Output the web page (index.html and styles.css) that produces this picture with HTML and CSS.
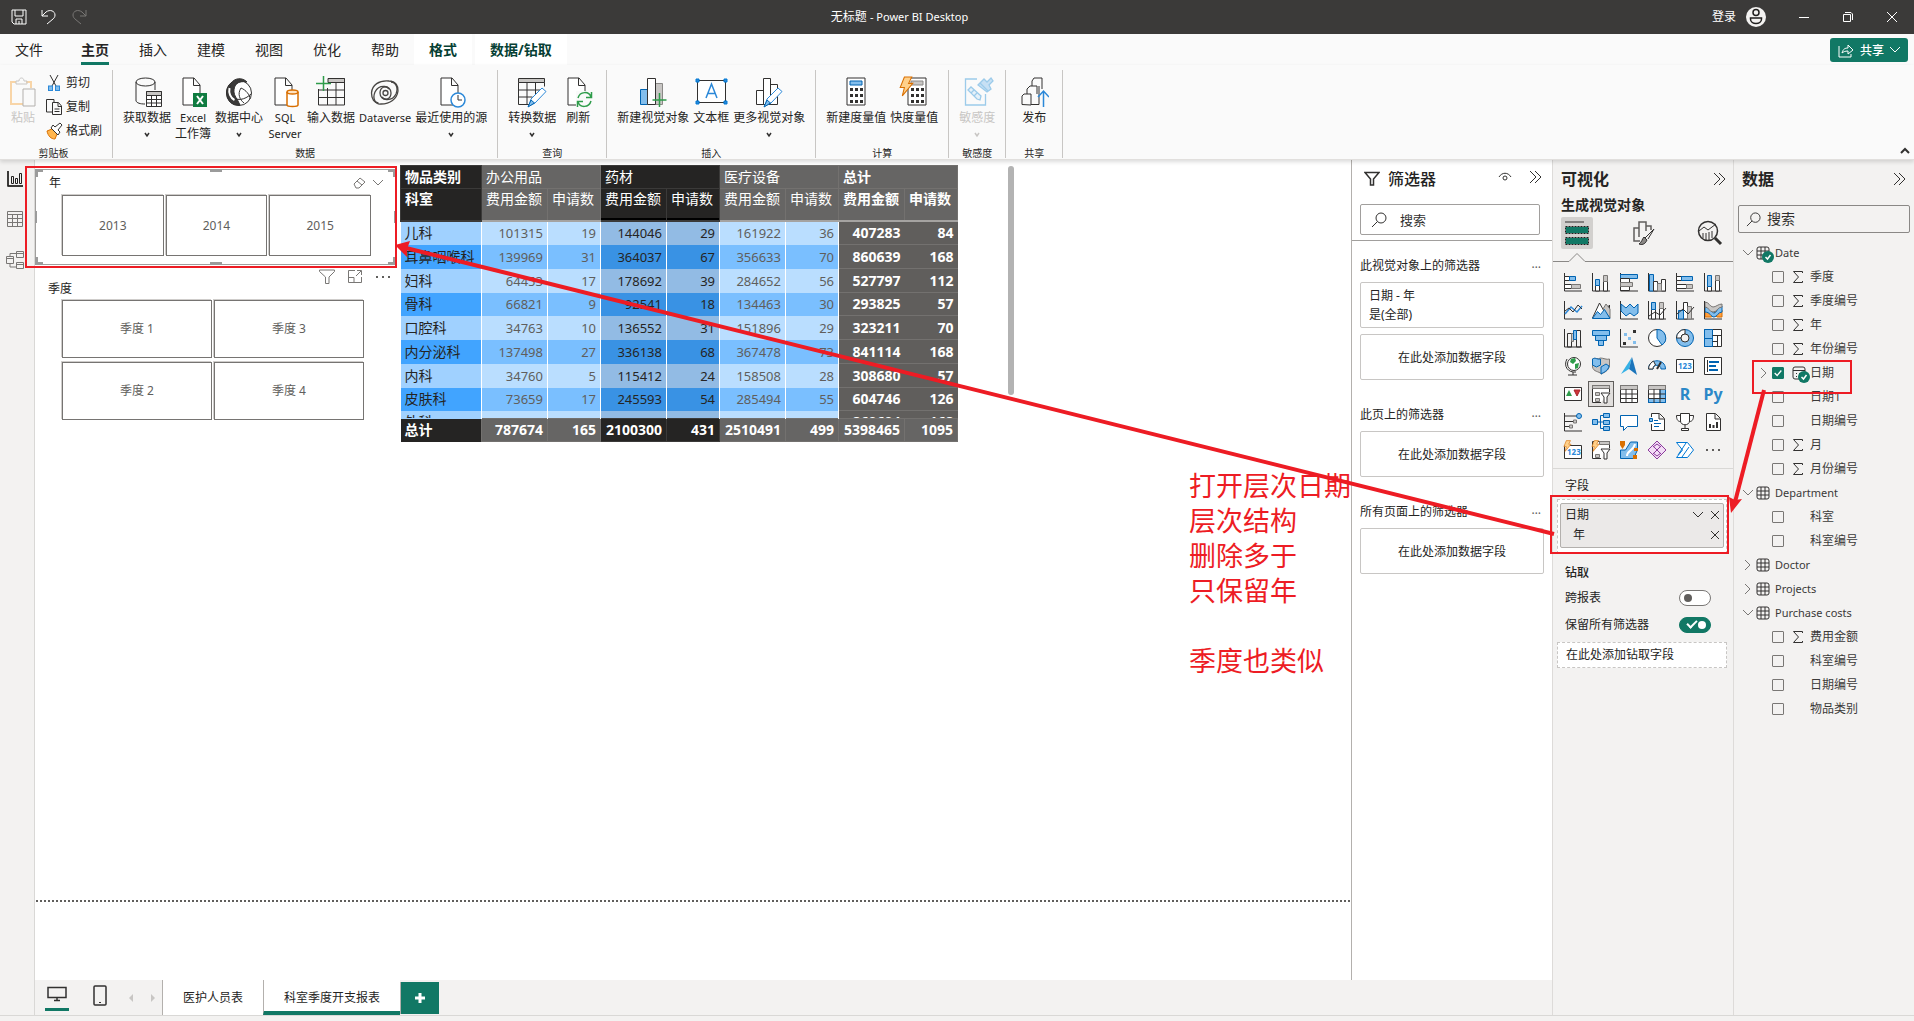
FILE: index.html
```html
<!DOCTYPE html>
<html lang="zh-CN">
<head>
<meta charset="utf-8">
<title>无标题 - Power BI Desktop</title>
<link rel="stylesheet" href="styles.css">
</head>
<body>
<svg class="defs" aria-hidden="true">
  <symbol id="dbl" viewBox="0 0 14 14"><path d="M2 1l6 6-6 6M7 1l6 6-6 6"/></symbol>
  <symbol id="down" viewBox="0 0 12 12"><path d="M1 3l5 5 5-5"/></symbol>
  <symbol id="right" viewBox="0 0 12 12"><path d="M3 1l5 5-5 5"/></symbol>
  <symbol id="cross" viewBox="0 0 10 10"><path d="M1 1l8 8M9 1l-8 8"/></symbol>
  <symbol id="caret" viewBox="0 0 6 6"><path d="M1 1l2 3 2-3" stroke-width="1.5"/></symbol>
  <symbol id="search" viewBox="0 0 16 16"><circle cx="10" cy="6" r="5"/><path d="M6.400 9.600L1 15"/></symbol>
  <symbol id="more" viewBox="0 0 16 4"><path d="M1 1h2v2H1zM7 1h2v2H7zM13 1h2v2h-2z" fill="#605e5c" stroke="none"/></symbol>
  <symbol id="sum" viewBox="0 0 12 14"><path d="M10.500 3V1.500h-9L6.500 7l-5 5.500h9V11"/></symbol>
  <symbol id="tbl" viewBox="0 0 14 14"><rect x="1" y="1" width="12" height="12" rx="2"/><path d="M1 5h12M1 9h12M5 1v12M9 1v12"/></symbol>
  <symbol id="doc" viewBox="0 0 30 32"><path d="M5 2h11l6 7v20H5zM15.500 2v7.500H22" fill="#fff"/></symbol>
  <symbol id="pen" viewBox="0 0 20 22"><path d="M2 20l2-7L15 2l4 3.500L8 17z" fill="#fff" stroke="#2b88d8"/><path d="M1 21l3-7 3.500 3z" fill="#83beec" stroke="#0063b1"/></symbol>
  <symbol id="calc" viewBox="0 0 30 32"><path d="M6 2h18v27H6z" fill="#fff"/><path d="M9 12h3v3H9zm5 0h3v3h-3zm5 0h3v3h-3zM9 18h3v3H9zm5 0h3v3h-3zm5 0h3v3h-3zM9 24h3v3H9zm5 0h3v3h-3zm5 0h3v3h-3z" fill="#323130" stroke="none"/></symbol>
  <symbol id="bolt" viewBox="0 0 14 20"><path d="M5 1h7L9 7h4L3 19l2-8H1z" fill="#ffd08a" stroke="#d96f00"/></symbol>
</svg>

<header class="titlebar">
  <div class="quick">
    <button aria-label="保存"><svg width="16" height="16" viewBox="0 0 16 16"><path d="M1 1h14v14H3l-2-2zM4 1v6h8V1M5 15v-5h6v5M8 12v3"/></svg></button>
    <button aria-label="撤消"><svg width="16" height="16" viewBox="0 0 16 16"><path d="M1 1v6h6M1 7l4-4c4-3 9-1 9 3 0 2-1 3-2 4l-6 5"/></svg></button>
    <button aria-label="恢复" class="dim"><svg width="16" height="16" viewBox="0 0 16 16"><path d="M15 1v6H9M15 7l-4-4C7 0 2 2 2 6c0 2 1 3 2 4l6 5"/></svg></button>
  </div>
  <div class="title">无标题 <span>- Power BI Desktop</span></div>
  <div class="window">
    <button class="login">登录 <svg width="20" height="20" viewBox="0 0 20 20"><circle cx="10" cy="10" r="10" fill="#f3f2f1" stroke="none"/><g stroke="#201f1e" stroke-width="1.500"><circle cx="10" cy="5.500" r="3"/><path d="M4.500 11h11v1c0 6-11 6-11 0z"/></g></svg></button>
    <button aria-label="最小化"><svg width="12" height="12" viewBox="0 0 12 12"><path d="M1 6.500h10"/></svg></button>
    <button aria-label="还原"><svg width="12" height="12" viewBox="0 0 12 12"><path d="M1.500 3.500h7v7h-7zM3 1.500h6l1.500 1.500v6"/></svg></button>
    <button aria-label="关闭"><svg width="12" height="12" viewBox="0 0 12 12"><path d="M1 1l10 10M11 1L1 11"/></svg></button>
  </div>
</header>

<nav class="tabs">
  <a href="#" class="file">文件</a><a href="#" class="on">主页</a><a href="#">插入</a><a href="#">建模</a><a href="#">视图</a><a href="#">优化</a><a href="#">帮助</a><a href="#" class="ctx">格式</a><a href="#" class="ctx second">数据/钻取</a>
  <button class="share"><svg width="18" height="16" viewBox="0 0 18 16"><path d="M2 4v11h12v-3M5 11c1-4 3-5 6-5V3M11 3l5 5-5 4V9c-3 0-5 1-6 2"/></svg>共享<svg width="12" height="12"><use href="#down"/></svg></button>
</nav>

<section class="ribbon">
  <div class="group">
    <div class="row">
      <button class="cmd off"><svg width="30" height="32" viewBox="0 0 30 32"><path d="M8 6H3v22h12M18 6h5v6" stroke="#f8d5a8" stroke-width="2"/><path d="M8 8V5h3c0-4 5-4 5 0h3v3z" stroke="#c8c6c4"/><path d="M15 13h12v17H15z" fill="#fafafa" stroke="#b3b0ad"/></svg>粘贴</button>
      <div class="stack">
        <button><svg width="18" height="18" viewBox="0 0 18 18"><path d="M5 1l6 11M13 1L7 12"/><rect x="3.500" y="12" width="4" height="4.500" fill="#83beec" stroke="#2b88d8"/><rect x="10.500" y="12" width="4" height="4.500" fill="#83beec" stroke="#2b88d8"/></svg>剪切</button>
        <button><svg width="18" height="18" viewBox="0 0 18 18"><path d="M7 14H1.500V1.500H9V4M7.500 4.500h6l3 3.500v8.500h-9zM13 5v3.500h3M9.500 11h5M9.500 13.500h5"/></svg>复制</button>
        <button><svg width="18" height="18" viewBox="0 0 18 18"><path d="M2 9l5-2 5 5-2 5c-4 0-7-3-8-8z" fill="#ffb54d" stroke="#d96f00"/><path d="M6 6l7 7 2-3-2-2 4-5-2-2-5 4-2-2z" fill="#fff"/></svg>格式刷</button>
      </div>
    </div>
    <div class="name">剪贴板</div>
  </div>
  <div class="group">
    <div class="row">
      <button class="cmd"><svg width="30" height="32" viewBox="0 0 30 32"><path d="M13 28c-5 0-8-1-9-3V6M23 6v8"/><ellipse cx="13.500" cy="6" rx="9.500" ry="4"/><path d="M14.500 15.500h15v15h-15z" fill="#fff"/><path d="M14.500 15.500h15v4h-15z" fill="#c8c6c4"/><path d="M19.500 19.500v11M24.500 19.500v11M14.500 23.500h15M14.500 27h15"/></svg>获取数据<svg class="ct" width="6" height="6"><use href="#caret"/></svg></button>
      <button class="cmd"><svg width="30" height="32" viewBox="0 0 30 32"><use href="#doc"/><path d="M15 17h14v14H15z" fill="#107c41" stroke="none"/><path d="M19 20l6 8M25 20l-6 8" stroke="#fff" stroke-width="2"/></svg><i>Excel</i>工作簿</button>
      <button class="cmd"><svg width="30" height="32" viewBox="0 0 30 32"><circle cx="15" cy="17" r="12.500" fill="#fff"/><path d="M7 7c4-5 11-6 16-1-5-1-10 0-12 4-2 5-1 9 2 13l3 6C8 30 3 25 2.500 17 2.500 13 4 9 7 7z" fill="#3b3a39"/><path d="M17 12c-4 6-1 12 3 15M17 12c5 2 9 7 9 11M6 19c6 7 15 5 21-1M7 9c-3 5-2 11 2 15" /><path d="M5.500 12c-1 5 1 10 5 12" stroke="#fff" stroke-width="2"/></svg>数据中心<svg class="ct" width="6" height="6"><use href="#caret"/></svg></button>
      <button class="cmd"><svg width="30" height="32" viewBox="0 0 30 32"><use href="#doc"/><path d="M17 16v13c0 2 11 2 11 0V16" fill="#fff" stroke="#d96f00" stroke-width="1.500"/><ellipse cx="22.500" cy="16" rx="5.500" ry="2" fill="#ffe2c0" stroke="#d96f00" stroke-width="1.500"/></svg><i>SQL</i><i>Server</i></button>
      <button class="cmd"><svg width="30" height="32" viewBox="0 0 30 32"><path d="M12 2.500h16.500v4H12z" fill="#c8c6c4"/><path d="M2.500 13v16h26V2.500M2.500 14h26M2.500 21.500h26M11.500 12v17M20 6v23M12 6.500h16"/><path d="M7.500 0v15M0 7.500h15" stroke="#2e9c4a" stroke-width="1.500"/></svg>输入数据</button>
      <button class="cmd"><svg width="30" height="32" viewBox="0 0 30 32"><g stroke="#484644" stroke-width="1.300"><path d="M19 13c-3-4-9-2-9 4 0 8 12 9 16 1 3-7-1-13-7-13C9 4 2 9 1.500 17c0 6 3 10 7 10"/><path d="M12 21c3 4 9 2 9-4 0-8-12-9-16-1-3 7 1 13 6 12 9 0 16-5 17-13 0-6-3-9-7-9"/><circle cx="15.500" cy="17" r="2.500"/></g></svg><i>Dataverse</i></button>
      <button class="cmd"><svg width="30" height="32" viewBox="0 0 30 32"><use href="#doc"/><circle cx="22" cy="24" r="7" fill="#fff" stroke="#2b88d8" stroke-width="1.500"/><path d="M22 19v5h4"/></svg>最近使用的源<svg class="ct" width="6" height="6"><use href="#caret"/></svg></button>
    </div>
    <div class="name">数据</div>
  </div>
  <div class="group">
    <div class="row">
      <button class="cmd"><svg width="30" height="32" viewBox="0 0 30 32"><path d="M1.500 2.500h26v4h-26z" fill="#c8c6c4"/><path d="M1.500 6.500v22h12M27.500 6.500v4M1.500 14h22M1.500 21h14M10 6.500v22M18.500 6.500v12"/><use href="#pen" x="10" y="10" width="20" height="22"/></svg>转换数据<svg class="ct" width="6" height="6"><use href="#caret"/></svg></button>
      <button class="cmd"><svg width="30" height="32" viewBox="0 0 30 32"><use href="#doc"/><path d="M13 15h16v17H13z" fill="#fafafa" stroke="none"/><path d="M15 22c2-7 11-7 13-1M28.500 16v5.500H23M28 25c-2 7-11 7-13 1M14.500 31v-5.500H20" stroke="#2e9c4a" stroke-width="1.500"/></svg>刷新</button>
    </div>
    <div class="name">查询</div>
  </div>
  <div class="group">
    <div class="row">
      <button class="cmd"><svg width="30" height="32" viewBox="0 0 30 32"><path d="M2.500 13.500h7v15h-7z" fill="#83beec" stroke="#0063b1"/><path d="M17.500 7.500h7v21h-7z" fill="#c8c6c4" stroke="#8a8886"/><path d="M9.500 2.500h8v26h-8z" fill="#fff"/><path d="M21.500 17v14M14.500 24h14" stroke="#2e9c4a" stroke-width="1.500"/></svg>新建视觉对象</button>
      <button class="cmd"><svg width="34" height="32" viewBox="0 0 34 32"><path d="M3.500 4.500h28v22h-28z" fill="#fff"/><path d="M2 3h3v3H2zm28 0h3v3h-3zM2 25h3v3H2zm28 0h3v3h-3z" fill="#2b88d8" stroke="#0078d4"/><path d="M12 22l5.500-14L23 22M14 17.500h7" stroke="#2b88d8" stroke-width="1.500"/></svg>文本框</button>
      <button class="cmd"><svg width="30" height="32" viewBox="0 0 30 32"><path d="M2.500 14.500h7v14h-7zM9.500 2.500h7v26h-7zM16.500 8.500h7v20h-7z" fill="#fff"/><use href="#pen" x="9" y="10" width="20" height="22"/></svg>更多视觉对象<svg class="ct" width="6" height="6"><use href="#caret"/></svg></button>
    </div>
    <div class="name">插入</div>
  </div>
  <div class="group">
    <div class="row">
      <button class="cmd"><svg width="30" height="32" viewBox="0 0 30 32"><use href="#calc"/><path d="M9 5h12v4H9z" fill="#83beec" stroke="#0063b1"/></svg>新建度量值</button>
      <button class="cmd"><svg width="30" height="32" viewBox="0 0 30 32"><use href="#calc" x="3"/><path d="M12 5h12v4H12z" fill="#c8c6c4" stroke="#8a8886"/><use href="#bolt" x="0" y="0" width="15" height="21"/></svg>快度量值</button>
    </div>
    <div class="name">计算</div>
  </div>
  <div class="group">
    <div class="row">
      <button class="cmd off"><svg width="34" height="32" viewBox="0 0 34 32"><g stroke="#9ccbea" stroke-width="1.300"><path d="M17 3H5.500v26h20V18"/><path d="M8 14l3-3 10 9-1 4-3-1z" fill="#e5f1fa"/><path d="M11 17l3-3M14 20l3-3"/><path d="M18 9l6-6 3 3 4-4 2 3-4 4 2 4-4 3z" fill="#c7e0f4"/><path d="M20 7l8 8"/></g></svg>敏感度<svg class="ct" width="6" height="6"><use href="#caret"/></svg></button>
    </div>
    <div class="name">敏感度</div>
  </div>
  <div class="group">
    <div class="row">
      <button class="cmd"><svg width="30" height="32" viewBox="0 0 30 32"><path d="M3 28.500V20l2-2h7v11zM8 18v-5l3-3h7v8M13 10V5l2-3h8v11M12 28.500h8V10"/><path d="M24.500 31V16M19 21l5.500-6 5.500 6" stroke="#2b88d8" stroke-width="1.500"/></svg>发布</button>
    </div>
    <div class="name">共享</div>
  </div>
  <button class="collapse" aria-label="折叠功能区"><svg width="10" height="8" viewBox="0 0 10 8"><path d="M1 6l4-4 4 4" stroke-width="2"/></svg></button>
</section>

<main>
  <nav class="rail">
    <button aria-label="报表视图" class="now"><svg width="18" height="18" viewBox="0 0 18 18"><path d="M2 1v15h15M5.500 13.500v-7h2v7zM9.500 13.500v-5h2v5zM13.500 13.500v-10h2v10z"/><path d="M2 1v15h15" stroke-width="1.500"/></svg></button>
    <button aria-label="数据视图"><svg width="18" height="18" viewBox="0 0 18 18"><path d="M1.500 1.500h15v15h-15zM1.500 4.500h15M1.500 8.500h15M1.500 12.500h15M6.500 4.500v12M11.500 4.500v12"/></svg></button>
    <button aria-label="模型视图"><svg width="20" height="20" viewBox="0 0 20 20"><path d="M1.500 6.500h7v7h-7zM1.500 8.500h7M11.500 1.500h7v6h-7zM11.500 3.500h7M11.500 12.500h7v6h-7zM11.500 14.500h7M5 6V3.500h6M5 14v3h6"/></svg></button>
  </nav>

  <div class="work">
    <div class="upper">
      <section class="canvas">
        <div class="visual year">
          <span class="frame"></span>
          <header><h3>年</h3><button aria-label="清除选择"><svg width="13" height="13" viewBox="0 0 13 13"><path d="M1 8l6-6 5 4-6 6H3zM4 5l5 4"/></svg></button><button aria-label="展开"><svg width="12" height="12"><use href="#down"/></svg></button></header>
          <div class="tiles"><button>2013</button><button>2014</button><button>2015</button></div>
        </div>
        <div class="visual quarter">
          <div class="hover"><svg width="16" height="16" viewBox="0 0 16 16"><path d="M.5 1h15v1.500L10 8v6.500H6.500V8L.5 2.500z"/></svg><svg width="16" height="16" viewBox="0 0 16 16"><path d="M8 1.500H1.500v12h13V8M10 1.500h4.500V6M14 2L9 7M1.500 8.500H7v5"/></svg><svg width="16" height="4"><use href="#more"/></svg></div>
          <header><h3>季度</h3></header>
          <div class="tiles"><button>季度 1</button><button>季度 3</button><button>季度 2</button><button>季度 4</button></div>
        </div>
        <table class="matrix">
          <colgroup><col class="c0"><col class="ca"><col class="cb"><col class="ca"><col class="cb"><col class="ca"><col class="cb"><col class="ca"><col class="cb"></colgroup>
          <thead>
            <tr><th class="k">物品类别</th><th colspan="2">办公用品</th><th colspan="2" class="k">药材</th><th colspan="2">医疗设备</th><th colspan="2" class="t">总计</th></tr>
            <tr><th class="k">科室</th><th>费用金额</th><th>申请数</th><th class="k u">费用金额</th><th class="k u">申请数</th><th>费用金额</th><th>申请数</th><th class="t">费用金额</th><th class="t">申请数</th></tr>
          </thead>
          <tbody>
            <tr><th>儿科</th><td>101315</td><td>19</td><td>144046</td><td>29</td><td>161922</td><td>36</td><td>407283</td><td>84</td></tr>
            <tr><th>耳鼻咽喉科</th><td>139969</td><td>31</td><td>364037</td><td>67</td><td>356633</td><td>70</td><td>860639</td><td>168</td></tr>
            <tr><th>妇科</th><td>64453</td><td>17</td><td>178692</td><td>39</td><td>284652</td><td>56</td><td>527797</td><td>112</td></tr>
            <tr><th>骨科</th><td>66821</td><td>9</td><td>92541</td><td>18</td><td>134463</td><td>30</td><td>293825</td><td>57</td></tr>
            <tr><th>口腔科</th><td>34763</td><td>10</td><td>136552</td><td>31</td><td>151896</td><td>29</td><td>323211</td><td>70</td></tr>
            <tr><th>内分泌科</th><td>137498</td><td>27</td><td>336138</td><td>68</td><td>367478</td><td>73</td><td>841114</td><td>168</td></tr>
            <tr><th>内科</th><td>34760</td><td>5</td><td>115412</td><td>24</td><td>158508</td><td>28</td><td>308680</td><td>57</td></tr>
            <tr><th>皮肤科</th><td>73659</td><td>17</td><td>245593</td><td>54</td><td>285494</td><td>55</td><td>604746</td><td>126</td></tr>
            <tr class="cut"><th><div>外科</div></th><td><div>100240</div></td><td><div>28</div></td><td><div>280102</div></td><td><div>64</div></td><td><div>400380</div></td><td><div>64</div></td><td><div>860604</div></td><td><div>168</div></td></tr>
          </tbody>
          <tfoot><tr><th class="k">总计</th><td>787674</td><td>165</td><td class="k">2100300</td><td class="k">431</td><td>2510491</td><td>499</td><td>5398465</td><td>1095</td></tr></tfoot>
        </table>
        <span class="thumb"></span>
        <span class="pageend"></span>
      </section>

      <aside class="filters">
        <header class="top"><h2><svg width="16" height="16" viewBox="0 0 16 16"><path d="M1 1.500h14L9.500 8v6H6.500V8z" stroke-width="1.500"/></svg>筛选器</h2><button aria-label="显示"><svg width="14" height="12" viewBox="0 0 14 12"><path d="M1 6c3-5 9-5 12 0"/><circle cx="7" cy="7" r="2"/></svg></button><button aria-label="折叠"><svg width="14" height="14"><use href="#dbl"/></svg></button></header>
        <label class="find"><svg width="16" height="16"><use href="#search"/></svg><input type="text" placeholder="搜索" aria-label="搜索"></label>
        <section><header><h4>此视觉对象上的筛选器</h4><button>…</button></header>
          <div class="card">日期 - 年<br>是(全部)</div><div class="card drop">在此处添加数据字段</div></section>
        <section><header><h4>此页上的筛选器</h4><button>…</button></header><div class="card drop">在此处添加数据字段</div></section>
        <section><header><h4>所有页面上的筛选器</h4><button>…</button></header><div class="card drop">在此处添加数据字段</div></section>
      </aside>
    </div>

    <footer class="pages">
      <button aria-label="桌面布局" class="desk"><svg width="20" height="16" viewBox="0 0 20 16"><path d="M1 1.500h18v10H1zM10 12v3M7 14.500h6" stroke-width="1.500"/></svg></button>
      <button aria-label="移动布局" class="phone"><svg width="14" height="22" viewBox="0 0 14 22"><rect x="1" y="1" width="12" height="19" rx="1" stroke-width="1.500"/><path d="M6 17.500h2"/></svg></button>
      <button aria-label="上一页"><svg width="6" height="8" viewBox="0 0 6 8"><path d="M5 0v8L1 4z" fill="#c8c6c4" stroke="none"/></svg></button>
      <button aria-label="下一页"><svg width="6" height="8" viewBox="0 0 6 8"><path d="M1 0v8l4-4z" fill="#c8c6c4" stroke="none"/></svg></button>
      <button class="page">医护人员表</button><button class="page sel">科室季度开支报表</button>
      <button class="add" aria-label="新建页"><svg width="12" height="12" viewBox="0 0 12 12"><path d="M6 1v10M1 6h10" stroke="#fff" stroke-width="3"/></svg></button>
    </footer>
  </div>

  <aside class="viz">
    <header class="top"><h2>可视化</h2><button aria-label="折叠"><svg width="14" height="14"><use href="#dbl"/></svg></button></header>
    <h3>生成视觉对象</h3>
    <div class="modes">
      <button class="sel" aria-label="生成"><svg width="26" height="28" viewBox="0 0 26 28"><path d="M1 3h19"/><path d="M1.500 7.500h23v7h-23zM1.500 18.500h23v7h-23z" fill="#117865" stroke="#d2d0ce"/><path d="M1.500 7.500h23v7h-23zM1.500 18.500h23v7h-23z" stroke="#201f1e" stroke-dasharray="2 1"/></svg></button>
      <button aria-label="格式"><svg width="24" height="26" viewBox="0 0 24 26"><path d="M8 21H2V8h5M7 17V2h7v9M14 6h5v4" stroke="#605e5c" stroke-width="1.500"/><path d="M22 9l-9 9M22 9l-6 10M12 17l3 3c-2 5-6 5-8 4 3-2 3-5 5-7z" fill="#8a8886"/></svg></button>
      <button aria-label="分析"><svg width="26" height="26" viewBox="0 0 26 26"><circle cx="11" cy="11" r="9.500" stroke-width="1.500"/><path d="M18 18l6 6" stroke-width="3"/><path d="M2 11l5-4 4 3 8-6M6 18v-5M9 20v-7M12 20v-8M15 18V11"/></svg></button>
    </div>
    <svg class="notch" width="16" height="9" viewBox="0 0 16 9"><path d="M0 8.500L8 .5l8 8" stroke="#8a8886"/></svg>
    <div class="gallery">
      <button aria-label="堆积条形图"><svg viewBox="0 0 20 20"><path d="M1.500 1v18H19"/><path d="M1.500 4.500h5v4h-5zM1.500 12.500h7v4h-7z" fill="#fff"/><path d="M6.500 4.500h6v4h-6z" class="b"/><path d="M8.500 12.500h9v4h-9z" class="g"/></svg></button>
      <button aria-label="堆积柱形图"><svg viewBox="0 0 20 20"><path d="M1.500 1v18H19"/><path d="M4.500 13.500h4V19h-4zM12.500 9.500h4V19h-4z" fill="#fff"/><path d="M4.500 7.500h4v6h-4z" class="b"/><path d="M12.500 3.500h4v6h-4z" class="g"/></svg></button>
      <button aria-label="簇状条形图"><svg viewBox="0 0 20 20"><path d="M1.500 1v18H19"/><path d="M1.500 2.500h17v4h-17z" class="b"/><path d="M1.500 6.500h9v4h-9zM1.500 14.500h9v4h-9z" fill="#fff"/><path d="M1.500 10.500h12v4h-12z" class="g"/></svg></button>
      <button aria-label="簇状柱形图"><svg viewBox="0 0 20 20"><path d="M1.500 1v18H19"/><path d="M2.500 2.500h4V19h-4z" class="b"/><path d="M6.500 9.500h4V19h-4zM14.500 7.500h4V19h-4z" fill="#fff"/><path d="M10.500 11.500h4V19h-4z" class="g"/></svg></button>
      <button aria-label="百分比堆积条形图"><svg viewBox="0 0 20 20"><path d="M1.500 1v18H19"/><path d="M1.500 12.500h10v4h-10zM1.500 4.500h6v4h-6z" fill="#fff"/><path d="M6.500 4.500h11v4h-11z" class="b"/><path d="M11.500 12.500h6v4h-6z" class="g"/></svg></button>
      <button aria-label="百分比堆积柱形图"><svg viewBox="0 0 20 20"><path d="M1.500 1v18H19"/><path d="M4.500 14.500h4V19h-4zM12.500 8.500h4V19h-4z" fill="#fff"/><path d="M4.500 3.500h4v11h-4z" class="b"/><path d="M12.500 3.500h4v5h-4z" class="g"/></svg></button>

      <button aria-label="折线图"><svg viewBox="0 0 20 20"><path d="M1.500 1v18H19"/><path d="M2 14l6-7 6 5 5-6" stroke="#2b88d8" stroke-width="1.500"/><path d="M2 11l4-3 4 4 5-7 4 4"/></svg></button>
      <button aria-label="分区图"><svg viewBox="0 0 20 20"><path d="M1.500 18l7-15 5 9 5-7v13z" fill="#fff"/><path d="M12 9l3-5 4 5v9z" class="g"/><path d="M1.500 18.500l5-7 3 3 4-5 5.500 9z" class="b"/></svg></button>
      <button aria-label="堆积面积图"><svg viewBox="0 0 20 20"><path d="M1.500 1v18H19"/><path d="M2 4l5 4 4-4 4 4 4-4v9l-4 3-4-3-4 3-5-5z" class="b"/></svg></button>
      <button aria-label="折线和堆积柱形图"><svg viewBox="0 0 20 20"><path d="M1.500 1v18H19"/><path d="M4.500 9.500h4V19h-4zM12.500 8.500h4V19h-4z" fill="#fff"/><path d="M4.500 2.500h4v7h-4z" class="b"/><path d="M12.500 2.500h4v6h-4z" class="g"/><path d="M2 16l6-4 5 3 6-7"/></svg></button>
      <button aria-label="折线和簇状柱形图"><svg viewBox="0 0 20 20"><path d="M1.500 1v18H19"/><path d="M8.500 2.500h4V19h-4z" fill="#fff"/><path d="M3.500 10.500h5V19h-5z" class="b"/><path d="M12.500 6.500h4V19h-4z" class="g"/><path d="M2 14l6-5 5 5 6-7"/></svg></button>
      <button aria-label="功能区图表"><svg viewBox="0 0 20 20"><path d="M2 10h4l4 4 4-4h5v7h-5l-2-2-4 2H2z" fill="#ff9d3c" stroke="#d96f00"/><path d="M2 6c6 0 6 7 9 7s3-6 8-7v6c-4 0-5 5-8 5s-4-5-9-5z" class="b"/><path d="M2 2c4 0 5 5 8 5s5-3 9-3v3c-4 0-5 5-9 5s-4-5-8-5z" class="g"/><path d="M1.500 1v18H19"/></svg></button>

      <button aria-label="瀑布图"><svg viewBox="0 0 20 20"><path d="M1.500 1v18H19M4.500 5.500h4V19h-4zM13.500 2.500h4V19h-4z"/><path d="M8.500 5.500h2v8h-2z" class="g"/><path d="M10.500 2.500h3v9h-3z" class="b"/></svg></button>
      <button aria-label="漏斗图"><svg viewBox="0 0 20 20"><path d="M1.500 2.500h17v5h-17zM4.500 7.500h11v5h-11zM7.500 12.500h5v5h-5z" class="b"/></svg></button>
      <button aria-label="散点图"><svg viewBox="0 0 20 20"><path d="M1.500 1v18H19"/><path d="M5 5h3v3H5zM9 9h3v3H9zM14 13h3v3h-3z" fill="#83beec" stroke="none"/><path d="M14 2h3v3h-3zM4 14h3v3H4z" fill="#323130" stroke="none"/></svg></button>
      <button aria-label="饼图"><svg viewBox="0 0 20 20"><circle cx="10" cy="10" r="8.500" fill="#fff"/><path d="M10 1.500a8.500 8.500 0 0 1 5 15.500L10 10z" class="b"/></svg></button>
      <button aria-label="环形图"><svg viewBox="0 0 20 20"><circle cx="10" cy="10" r="8.500" class="b"/><path d="M1.500 10A8.500 8.500 0 0 1 10 1.500V6a4 4 0 0 0-4 4z" fill="#fff"/><circle cx="10" cy="10" r="4" fill="#f3f2f1"/></svg></button>
      <button aria-label="树状图"><svg viewBox="0 0 20 20"><path d="M1.500 1.500h17v17h-17z" fill="#fff"/><path d="M1.500 1.500h8v9h-8zM1.500 10.500h8v8h-8z" class="b"/><path d="M9.500 7.500h9M14.500 7.500v11M9.500 13.500h5"/></svg></button>

      <button aria-label="地图"><svg viewBox="0 0 20 20"><circle cx="11" cy="8" r="6.500" fill="#fff"/><path d="M8 3l4-1 1 3-3 3-3-2zM12 8l4-1-1 5-3 1z" fill="#2e9c4a" stroke="none"/><path d="M4 3c-4 7 1 14 9 13M10 16v3M5 19h9"/></svg></button>
      <button aria-label="着色地图"><svg viewBox="0 0 20 20"><path d="M1.500 3c3-2 5 1 8-1 3 0 6 2 9 1v7c-1 5-5 6-8 8-3-3-8-2-9-7z" class="g"/><path d="M1.500 3c3-2 5 1 8 0v6l-4 2-4-2zM10 11l5-3 3 2c-1 5-5 6-8 8z" class="b"/></svg></button>
      <button aria-label="Azure 地图"><svg viewBox="0 0 20 20"><path d="M13 1L2 18l8-5z" fill="#35b1e6" stroke="none"/><path d="M13 1l5 18-8-6z" fill="#1b75bb" stroke="none"/></svg></button>
      <button aria-label="仪表"><svg viewBox="0 0 20 20"><path d="M1.500 13c0-11 17-11 17 0H14c0-5-8-5-8 0z" class="b"/><path d="M1.500 13c0-4 3-7 5-8l2 4c-2 1-2.500 2-2.500 4z" fill="#fff"/><path d="M10 13l4-7" stroke-width="2"/></svg></button>
      <button aria-label="卡片图"><svg viewBox="0 0 20 20"><path d="M1.500 3.500h17v13h-17z" fill="#fff"/><text x="3" y="13">123</text></svg></button>
      <button aria-label="多行卡"><svg viewBox="0 0 20 20"><path d="M1.500 1.500h17v17h-17zM4.500 4v12" fill="#fff"/><path d="M6 6h10M6 10h7M6 14h9" stroke="#0063b1" stroke-width="2"/></svg></button>

      <button aria-label="KPI"><svg viewBox="0 0 20 20"><path d="M1.500 3.500h17v13h-17z" fill="#fff"/><path d="M3 12l3-6 3 6z" fill="#2e9c4a" stroke="none"/><path d="M11 6h6l-3 6z" fill="#d13438" stroke="#a4262c"/></svg></button>
      <button aria-label="切片器" class="sel"><svg viewBox="0 0 20 20"><path d="M10 18.500H1.500v-17h17V8" fill="#fff"/><path d="M1.500 1.500h17v3h-17zM4.500 8.500h4v3h-4zM4.500 14.500h4v3h-4z" class="g"/><path d="M10 9h9l-3 4v6h-3v-6z" fill="#fff"/></svg></button>
      <button aria-label="表"><svg viewBox="0 0 20 20"><path d="M1.500 1.500h17v17h-17z" fill="#fff"/><path d="M1.500 1.500h17v4h-17z" class="g"/><path d="M1.500 10h17M1.500 14.500h17M7 5v14M13 5v14"/></svg></button>
      <button aria-label="矩阵"><svg viewBox="0 0 20 20"><path d="M1.500 1.500h17v17h-17z" fill="#fff"/><path d="M13 5h5.500v13.500h-17V14.500H13z" class="b"/><path d="M1.500 1.500h17v4h-17z" class="g"/><path d="M1.500 10h17M1.500 14.500h17M7 5v14M13 5v14"/></svg></button>
      <button class="lang">R</button>
      <button class="lang">Py</button>

      <button aria-label="关键影响者"><svg viewBox="0 0 20 20"><path d="M1.500 1v18H19M2 4h12M2 9.500h9M2 14.500h5"/><circle cx="16" cy="4" r="2.500" class="b"/><path d="M10.500 8h3v3h-3zM6.500 13h3v3h-3z" class="g"/></svg></button>
      <button aria-label="分解树"><svg viewBox="0 0 20 20"><path d="M1.500 7.500h5v5h-5zM12.500 1.500h6v4h-6zM12.500 8.500h6v4h-6zM12.500 14.500h6v4h-6z" class="b"/><path d="M6.500 10h6M9.500 3.500v13M9.500 3.500h3M9.500 16.500h3" stroke="#0063b1"/></svg></button>
      <button aria-label="问答"><svg viewBox="0 0 20 20"><path d="M1.500 3.500h17v11h-10l-4 4v-4h-3z" fill="#fff" stroke="#0063b1"/></svg></button>
      <button aria-label="叙述"><svg viewBox="0 0 20 20"><path d="M4.500 5V1.500h8l5 5v12h-13V12M12 2v5h5" fill="#fff"/><path d="M2.500 6.500h3v3h-3z" class="b"/><path d="M7 8.500h4M7 11.500h7M7 14.500h5" stroke="#0063b1"/></svg></button>
      <button aria-label="目标"><svg viewBox="0 0 20 20"><path d="M5.500 1.500h9V9c0 5-9 5-9 0zM5 3.500H1.500c0 5 2 6 4 6M15 3.500h3.500c0 5-2 6-4 6M10 13v3M6.500 18.500v-2h7v2z" fill="#fff"/></svg></button>
      <button aria-label="分页报表"><svg viewBox="0 0 20 20"><path d="M3.500 1.500h9l5 5v12h-14zM12 2v5h5" fill="#fff"/><path d="M7 16v-4M10.500 16v-3M14 16v-6" stroke-width="2"/></svg></button>

      <button aria-label="卡片新"><svg viewBox="0 0 20 20"><path d="M1.500 5.500h17v13h-17z" fill="#fff"/><text x="4" y="15">123</text><use href="#bolt" width="9" height="12"/></svg></button>
      <button aria-label="切片器新"><svg viewBox="0 0 20 20"><path d="M10 18.500H1.500v-17h17V8" fill="#fff"/><path d="M8.500 1.500h10v3h-10zM4.500 14.500h4v3h-4z" class="g"/><path d="M10 9h9l-3 4v6h-3v-6z" fill="#fff"/><use href="#bolt" width="9" height="12"/></svg></button>
      <button aria-label="ArcGIS"><svg viewBox="0 0 20 20"><path d="M1.500 10h5l5-8h7v8l-4 8.500h-13z" class="b"/><path d="M8 16c0-6 6-4 8-12" stroke="#fff" stroke-width="2"/><path d="M1 1h5v4l-2.500 4L1 5zM15 8h4v3h-4zM14 15h4v4h-4z" fill="#d96f00" stroke="none"/></svg></button>
      <button aria-label="Power Apps"><svg viewBox="0 0 20 20"><g stroke="#8b3a9c" fill="none"><path d="M10 1l9 9-9 9-9-9z" fill="#f3dcf6"/><path d="M5.500 5.500l9 9M14.500 5.500l-9 9"/><path d="M6 7l4-3 4 3M6 13l4 3 4-3"/></g></svg></button>
      <button aria-label="Power Automate"><svg viewBox="0 0 20 20"><path d="M1.500 2.500h11l6 7.500-6 7.500h-11l6-7.500zM7 17l7-10M3 15l8-12" fill="#fff" stroke="#0078d4"/></svg></button>
      <button aria-label="更多"><svg viewBox="0 0 20 20"><path d="M3 9h2v2H3zM9 9h2v2H9zM15 9h2v2h-2z" fill="#605e5c" stroke="none"/></svg></button>
    </div>
    <div class="wells">
      <h4>字段</h4>
      <div class="well">
        <div class="chip">
          <div>日期<button aria-label="选项"><svg width="12" height="12"><use href="#down"/></svg></button><button aria-label="删除"><svg width="10" height="10"><use href="#cross"/></svg></button></div>
          <div class="sub">年<button aria-label="删除"><svg width="10" height="10"><use href="#cross"/></svg></button></div>
        </div>
      </div>
      <h4 class="strong">钻取</h4>
      <label class="switch">跨报表<input type="checkbox" role="switch"></label>
      <label class="switch">保留所有筛选器<input type="checkbox" role="switch" checked></label>
      <div class="well drill">在此处添加钻取字段</div>
    </div>
  </aside>

  <aside class="data">
    <header class="top"><h2>数据</h2><button aria-label="折叠"><svg width="14" height="14"><use href="#dbl"/></svg></button></header>
    <label class="find"><svg width="15" height="15"><use href="#search"/></svg><input type="text" placeholder="搜索" aria-label="搜索字段"></label>
    <ul class="tree">
      <li class="entity"><svg width="12" height="12"><use href="#down"/></svg><span class="ic ok"><svg width="14" height="14"><use href="#tbl"/></svg></span>Date</li>
      <li><label><input type="checkbox"><span class="ic"><svg width="12" height="14"><use href="#sum"/></svg></span>季度</label></li>
      <li><label><input type="checkbox"><span class="ic"><svg width="12" height="14"><use href="#sum"/></svg></span>季度编号</label></li>
      <li><label><input type="checkbox"><span class="ic"><svg width="12" height="14"><use href="#sum"/></svg></span>年</label></li>
      <li><label><input type="checkbox"><span class="ic"><svg width="12" height="14"><use href="#sum"/></svg></span>年份编号</label></li>
      <li class="open"><svg width="12" height="12"><use href="#right"/></svg><label><input type="checkbox" checked><span class="ic ok"><svg width="14" height="14" viewBox="0 0 14 14"><rect x="1" y="1" width="12" height="12" rx="2"/><path d="M1 4.500h12M4 7.500h1M7 7.500h1M10 7.500h1M4 10.500h1M7 10.500h1"/></svg></span>日期</label></li>
      <li><label><input type="checkbox"><span class="ic"></span>日期1</label></li>
      <li><label><input type="checkbox"><span class="ic"></span>日期编号</label></li>
      <li><label><input type="checkbox"><span class="ic"><svg width="12" height="14"><use href="#sum"/></svg></span>月</label></li>
      <li><label><input type="checkbox"><span class="ic"><svg width="12" height="14"><use href="#sum"/></svg></span>月份编号</label></li>
      <li class="entity"><svg width="12" height="12"><use href="#down"/></svg><span class="ic"><svg width="14" height="14"><use href="#tbl"/></svg></span>Department</li>
      <li><label><input type="checkbox"><span class="ic"></span>科室</label></li>
      <li><label><input type="checkbox"><span class="ic"></span>科室编号</label></li>
      <li class="entity"><svg width="12" height="12"><use href="#right"/></svg><span class="ic"><svg width="14" height="14"><use href="#tbl"/></svg></span>Doctor</li>
      <li class="entity"><svg width="12" height="12"><use href="#right"/></svg><span class="ic"><svg width="14" height="14"><use href="#tbl"/></svg></span>Projects</li>
      <li class="entity"><svg width="12" height="12"><use href="#down"/></svg><span class="ic"><svg width="14" height="14"><use href="#tbl"/></svg></span>Purchase costs</li>
      <li><label><input type="checkbox"><span class="ic"><svg width="12" height="14"><use href="#sum"/></svg></span>费用金额</label></li>
      <li><label><input type="checkbox"><span class="ic"></span>科室编号</label></li>
      <li><label><input type="checkbox"><span class="ic"></span>日期编号</label></li>
      <li><label><input type="checkbox"><span class="ic"></span>物品类别</label></li>
    </ul>
  </aside>
</main>
<div class="status"></div>

<svg class="marks" aria-hidden="true">
  <g stroke="#ed1c24" stroke-width="2" fill="none">
    <rect x="26" y="167" width="370" height="100"/>
    <rect x="1753" y="361" width="98" height="32"/>
    <rect x="1551" y="496" width="177" height="57"/>
    <path d="M1554 534L406 248" stroke-width="4"/>
    <path d="M1764 390L1735 502" stroke-width="4"/>
  </g>
  <path d="M395 245l15-4-3 8 0 8z" fill="#ed1c24"/>
  <path d="M1731 513l-2-16 6 3 7-1z" fill="#ed1c24"/>
</svg>
<p class="note">打开层次日期<br>层次结构<br>删除多于<br>只保留年<br><br>季度也类似</p>
</body>
</html>
```
FILE: styles.css
```css
* { box-sizing: border-box; }
body {
  margin: 0;
  min-height: 100vh;
  display: flex;
  flex-direction: column;
  position: relative;
  font: 12px/16px "Noto Sans", "Noto Sans CJK SC", sans-serif;
  color: #252423;
  background: #f3f2f1;
}
h2, h3, h4, p, ul { margin: 0; padding: 0; font-weight: 400; }
button { border: 0; padding: 0; background: none; font: inherit; color: inherit; }
a { color: inherit; text-decoration: none; }
svg { fill: none; stroke: #323130; flex: none; }
svg text { font: 700 8px "Noto Sans", sans-serif; fill: #2b88d8; stroke: none; }
.defs { position: absolute; width: 0; height: 0; }

/* title bar */
.titlebar { height: 34px; background: #3b3a39; color: #fff; display: flex; align-items: center; }
.titlebar svg { stroke: #fff; }
.titlebar .dim svg { stroke: #797775; }
.quick { display: flex; gap: 14px; padding-left: 11px; align-items: center; }
.quick button, .window button { display: flex; align-items: center; }
.title { flex: 1; text-align: center; }
.title span { font-size: 11px; }
.window { display: flex; align-items: center; gap: 32px; padding-right: 16px; }
.window .login { gap: 10px; }

/* ribbon */
.tabs { height: 31px; background: #fafafa; display: flex; font-size: 14px; line-height: 31px; }
.tabs a { padding: 0 15px; position: relative; }
.tabs .file { padding-right: 23px; }
.tabs .on, .tabs .ctx { font-weight: 700; }
.tabs .on::after { content: ""; position: absolute; left: 15px; right: 15px; bottom: 0; height: 3px; background: #117865; }
.tabs .ctx { background: #fff; color: #063f34; }
.tabs .second { margin-left: 3px; }
.share {
  margin: 4px 6px 3px auto; padding: 0 7px; border-radius: 3px; background: #117865; color: #fff;
  display: flex; align-items: center; gap: 5px; font-size: 12px; font-weight: 500;
}
.share svg { stroke: #fff; }
.ribbon {
  height: 95px; background: #fafafa; display: flex; padding: 5px 0 1px;
  border-bottom: 1px solid #e1dfdd; box-shadow: 0 2px 4px rgba(0, 0, 0, .14); position: relative; z-index: 1;
}
.group { border-right: 1px solid #c8c6c4; padding: 6px 10px 0; display: flex; flex-direction: column; justify-content: space-between; }
.group:first-child { padding-left: 5px; }
.row { display: flex; gap: 4px; align-items: flex-start; }
.cmd { min-width: 36px; display: flex; flex-direction: column; align-items: center; white-space: nowrap; }
.cmd svg { margin-bottom: 2px; }
.cmd i { font-style: normal; font-size: 11px; }
.cmd .ct { margin-top: 6px; }
.off { color: #c8c6c4; }
.off .ct { stroke: #c8c6c4; }
.name { text-align: center; font-size: 10px; line-height: 10px; }
.stack { display: flex; flex-direction: column; gap: 6px; margin-top: -2px; }
.stack button { display: flex; align-items: center; gap: 3px; height: 18px; }
.collapse { margin: auto 4px 3px auto; display: flex; }

/* body */
main { flex: 1; display: flex; }
.rail { width: 35px; border-right: 1px solid #d9d8d6; padding-top: 10px; display: flex; flex-direction: column; gap: 22px; align-items: center; }
.rail button { display: flex; padding-right: 4px; }
.rail svg { stroke: #797775; }
.rail .now svg { stroke: #201f1e; }
.work { flex: 1; display: flex; flex-direction: column; min-width: 0; }
.upper { flex: 1; display: flex; background: #fff; }

/* report canvas */
.canvas { flex: 1; position: relative; min-height: 760px; overflow: hidden; }
.visual { position: absolute; left: 0; width: 361px; }
.visual header { display: flex; align-items: center; padding: 0 11px 0 13px; gap: 6px; }
.visual h3 { flex: 1; font-size: 12px; }
.visual svg { stroke: #797775; }
.visual button { display: flex; }
.year { top: 9px; height: 96px; border: 1px solid #a19f9d; }
.year header { height: 25px; }
.year .tiles { grid-template-columns: repeat(3, 1fr); grid-auto-rows: 61px; width: 309px; margin-left: 26px; }
.frame {
  position: absolute; inset: -1px;
  --h: linear-gradient(#9b9b9b, #9b9b9b);
  background:
    var(--h) 0 0/8px 3px, var(--h) 0 0/3px 8px, var(--h) 100% 0/8px 3px, var(--h) 100% 0/3px 8px,
    var(--h) 0 100%/8px 3px, var(--h) 0 100%/3px 8px, var(--h) 100% 100%/8px 3px, var(--h) 100% 100%/3px 8px,
    var(--h) 50% 0/12px 3px, var(--h) 50% 100%/12px 3px, var(--h) 0 50%/2px 12px, var(--h) 100% 50%/2px 12px;
  background-repeat: no-repeat;
}
.quarter { top: 109px; }
.hover { display: flex; justify-content: flex-end; align-items: center; gap: 12px; height: 16px; padding-right: 5px; }
.quarter header { height: 8px; }
.quarter .tiles { grid-template-columns: 1fr 1fr; grid-auto-rows: 58px; row-gap: 4px; width: 302px; margin: 7px 0 0 27px; }
.tiles { display: grid; gap: 2px; position: relative; }
.tiles button { align-items: center; justify-content: center; border: 1px solid #767472; box-shadow: -1px -1px 0 #cfcdcb; background: #fff; color: #605e5c; }
.thumb { position: absolute; left: 973px; top: 6px; width: 6px; height: 229px; border-radius: 3px; background: #b3b3b3; }
.pageend { position: absolute; left: 1px; right: 0; top: 740px; height: 2px; background: repeating-linear-gradient(90deg, #605e5c 0 2px, transparent 2px 4px); }

.matrix { position: absolute; left: 365px; top: 5px; width: 558px; table-layout: fixed; border-collapse: collapse; font-size: 14px; }
.c0 { width: 81px; } .ca { width: 66px; } .cb { width: 53px; }
.matrix th, .matrix td { padding: 0 4px; height: 24px; line-height: 20px; white-space: nowrap; overflow: hidden; }
.matrix th { text-align: left; font-weight: 400; }
.matrix thead th, .matrix tfoot td { background: #666564; color: #fff; border: 1px solid #73716f; }
.matrix thead th { height: 23px; }
.matrix thead th.t, .matrix thead th:first-child { font-weight: 700; }
.matrix thead .k, .matrix tfoot .k { background: #252423; color: #fff; border-color: #3b3a39; }
.matrix thead tr + tr th { height: 32px; vertical-align: top; border-bottom: 2px solid #a5a3a1; }
.matrix thead .u { box-shadow: inset 0 -2px #000; }
.matrix td { text-align: right; font-size: 13px; }
.matrix tbody tr { --a: #a0d1ff; --b: #badeff; --c: #92bbe4; }
.matrix tbody tr:nth-child(even) { --a: #41a4ff; --b: #7abfff; --c: #3992e4; }
.matrix tbody tr:nth-child(4n) > * { height: 23px; }
.matrix tbody th { background: var(--a); }
.matrix tbody td { background: var(--b); color: #605e5c; }
.matrix tbody td:nth-child(4), .matrix tbody td:nth-child(5) { background: var(--c); color: #252423; }
.matrix tbody td:nth-child(n+8) { background: #605e5c; color: #fff; font-weight: 700; font-size: 14px; border: 0 solid #73716f; border-bottom-width: 1px; }
.matrix tbody th, .matrix tbody td { border-right: 1px solid rgba(255, 255, 255, .25); }
.matrix .cut > * { height: 7px; }
.matrix .cut div { height: 7px; overflow: hidden; line-height: 22px; }
.matrix tfoot th, .matrix tfoot td { font-weight: 700; font-size: 14px; height: 23px; }
.matrix tfoot td { padding-left: 0; }

/* filters */
.top { display: flex; align-items: center; }
.top h2 { flex: 1; font-size: 16px; line-height: 24px; font-weight: 700; display: flex; align-items: center; gap: 8px; }
.top button { display: flex; }
.find { display: flex; align-items: center; background: #fff; border: 1px solid #8a8886; }
.find input { border: 0; outline: 0; background: none; min-width: 0; flex: 1; font: inherit; font-size: 14px; padding: 0; }
.find input::placeholder { color: #323130; opacity: 1; }
.filters { width: 201px; border-left: 1px solid #b3b0ad; padding: 7px 8px 0; }
.filters .top { padding: 0 2px 0 4px; gap: 16px; }
.filters .top h2 { font-weight: 500; }
.filters .find { height: 31px; margin: 13px 4px 0 0; padding-left: 10px; gap: 13px; border-color: #a19f9d; border-radius: 2px; }
.filters .find input { font-size: 13px; }
.filters section header { display: flex; justify-content: space-between; align-items: center; height: 16px; margin-bottom: 8px; padding-right: 3px; }
.filters header button { color: #605e5c; padding-bottom: 4px; }
.filters .find + section { border-top: 1px solid #a19f9d; margin: 5px -8px 0; padding: 17px 8px 0; }
.card { height: 46px; border: 1px solid #c8c6c4; border-radius: 2px; padding: 3px 8px; line-height: 19px; margin-bottom: 6px; }
section .card:last-child { margin-bottom: 0; }
.drop { display: flex; align-items: center; justify-content: center; }
.filters section + section { margin-top: 27px; }

/* page tabs */
.pages { height: 35px; display: flex; align-items: stretch; }
.pages > button { display: flex; align-items: center; justify-content: center; }
.pages .desk { margin-left: 10px; width: 24px; border-bottom: 3px solid #117865; margin-bottom: 4px; }
.pages .phone { width: 14px; margin: 0 21px 4px 24px; }
.pages .phone + button { width: 6px; }
.pages .phone + button + button { width: 6px; margin: 0 6px 0 16px; }
.pages .page { background: #fff; border-left: 1px solid #b3b0ad; padding: 0 20px; }
.pages .sel { border-bottom: 4px solid #117865; padding-top: 4px; }
.pages .add { background: #117865; width: 39px; margin: 2px 0 1px; border-left: 1px solid #b3b0ad; }

/* visualizations */
.viz, .data { width: 181px; border-left: 1px solid #dddbd9; }
.viz { padding: 7px 0 0; }
.viz .top { padding: 0 7px 0 8px; }
.viz > h3 { font-weight: 700; padding-left: 8px; line-height: 18px; margin: 5px 0 3px; }
.modes { display: flex; justify-content: space-between; padding: 0 7px 0 8px; }
.modes button { width: 32px; height: 32px; display: flex; align-items: center; justify-content: center; border-radius: 2px; }
.modes .sel { background: #d2d0ce; }
.notch { display: block; margin: 4px 0 -1px 16px; background: #f3f2f1; position: relative; }
.gallery { display: grid; grid-template-columns: repeat(6, 28px); grid-auto-rows: 28px; padding: 6px 6px 4px; border-top: 1px solid #8a8886; border-bottom: 1px solid #d9d8d6; }
.gallery button { display: flex; align-items: center; justify-content: center; margin: 2px; }
.gallery svg { width: 20px; height: 20px; }
.gallery .sel { background: #e1dfdd; outline: 1px solid #605e5c; }
.gallery .lang { font: 700 16px/20px "Noto Sans", sans-serif; color: #2b88c8; }
.b { fill: #83beec; stroke: #0063b1; }
.g { fill: #c8c6c4; stroke: #797775; }
.wells { padding: 8px 6px 0 4px; }
.wells h4 { padding-left: 8px; line-height: 18px; }
.wells .strong { font-weight: 500; margin-top: 10px; }
.well { border: 1px dashed #c8c6c4; background: #fff; padding: 3px 2px 5px; margin-top: 4px; }
.chip { background: #ebe9e8; border: 1px solid #b3b0ad; border-radius: 2px; padding: 1px 3px 2px 4px; line-height: 20px; }
.chip div { display: flex; align-items: center; gap: 6px; }
.chip div button { display: flex; }
.chip div button:first-of-type { margin-left: auto; }
.chip .sub { padding-left: 8px; }
.switch { display: flex; justify-content: space-between; align-items: center; padding: 0 16px 0 8px; height: 27px; }
.strong + .switch { margin-top: 2px; }
.switch input { appearance: none; margin: 0; width: 32px; height: 16px; border: 1px solid #797775; border-radius: 8px; background: #fff; display: flex; align-items: center; padding: 0 4px; }
.switch input::before { content: ""; width: 8px; height: 8px; border-radius: 4px; background: #605e5c; }
.switch input:checked { background: #117865; border-color: #117865; flex-direction: row-reverse; justify-content: space-between; }
.switch input:checked::before { background: #fff; }
.switch input:checked::after { content: ""; width: 8px; height: 4px; border: solid #fff; border-width: 0 0 2px 2px; transform: rotate(-45deg); margin: 0 0 3px 3px; }
.well.drill { padding: 4px 8px; margin-top: 4px; }

/* data */
.data .top { padding: 7px 8px 0; }
.data .find { height: 28px; margin: 14px 4px 8px; padding: 0 7px; gap: 6px; border-radius: 2px; background: #f3f2f1; }
.tree { list-style: none; color: #3b3a39; }
.tree li { height: 24px; display: flex; align-items: center; padding-left: 38px; }
.tree .entity { padding-left: 8px; gap: 2px; font-size: 11px; }
.tree .open { padding-left: 24px; gap: 2px; }
.tree label { display: flex; align-items: center; }
.tree .entity > svg, .open > svg { stroke: #797775; }
.ic { width: 17px; height: 14px; position: relative; display: flex; }
.tree label .ic { width: 18px; margin-left: 8px; }
.ok::after {
  content: ""; position: absolute; left: 6px; top: 5px; width: 12px; height: 12px; border-radius: 6px;
  background: #117865 url("data:image/svg+xml,%3Csvg xmlns='http://www.w3.org/2000/svg' viewBox='0 0 12 12'%3E%3Cpath d='M3.500 6l2 2 3-4' fill='none' stroke='white' stroke-width='1.500'/%3E%3C/svg%3E");
}
.tree input { appearance: none; margin: 0; width: 12px; height: 12px; border: 1px solid #797775; border-radius: 1px; }
.tree input:checked { border-color: #117865; background: #117865 url("data:image/svg+xml,%3Csvg xmlns='http://www.w3.org/2000/svg' viewBox='0 0 12 12'%3E%3Cpath d='M2 6l3 3 5-6' fill='none' stroke='white' stroke-width='1.500'/%3E%3C/svg%3E"); }
.status { height: 6px; border-top: 1px solid #d9d8d6; }

/* review marks drawn over the window */
.marks { position: absolute; inset: 0; width: 100%; height: 100%; pointer-events: none; z-index: 2; stroke: none; }
.note { position: absolute; left: 1189px; top: 468px; font-size: 27px; line-height: 35px; color: #ed1c24; z-index: 2; white-space: nowrap; }
```
